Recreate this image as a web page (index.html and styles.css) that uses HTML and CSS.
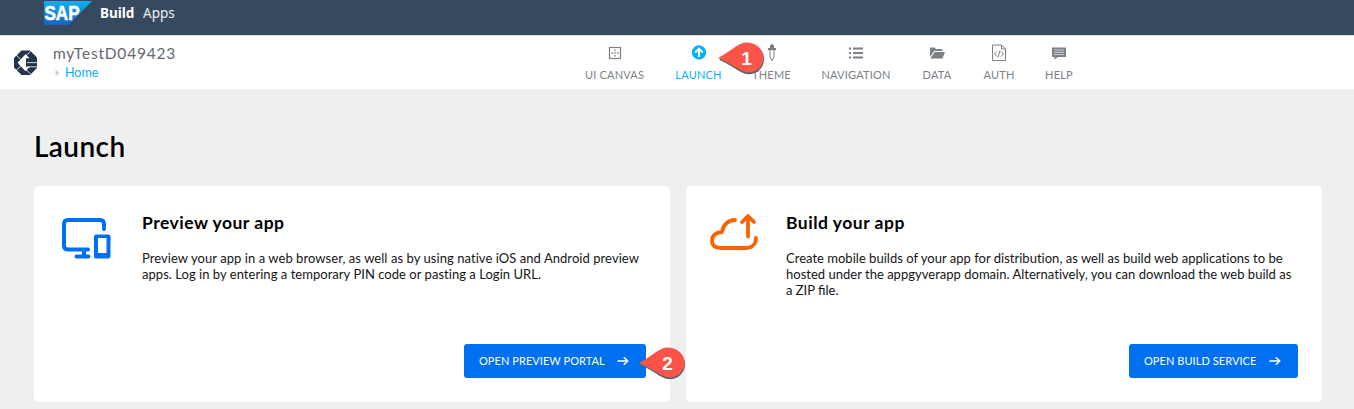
FILE: index.html
```html
<!DOCTYPE html>
<html lang="en">
<head>
<meta charset="utf-8">
<title>SAP Build Apps</title>
<link rel="stylesheet" href="styles.css">
</head>
<body>
<header class="shell">
  <svg class="sap-logo" width="48" height="24" viewBox="0 0 48 24">
    <defs><linearGradient id="sap" x1="0" y1="0" x2="0" y2="1"><stop offset="0" stop-color="#0fb0ee"/><stop offset="1" stop-color="#1b62c4"/></linearGradient></defs>
    <path d="M0 0H48L24.500 24H0Z" fill="url(#sap)"/>
    <text class="sap-text" x="0.500" y="18.500" textLength="35" lengthAdjust="spacingAndGlyphs">SAP</text>
  </svg>
  <span class="product-bold">Build</span><span class="product">Apps</span>
</header>
<nav class="toolbar">
  <svg class="app-logo" width="24" height="26" viewBox="0 0 24 26">
    <path d="M7.500 .5H16L23 7.500V18L16 25H7.500L0 17.500V8Z" fill="#22344c"/>
    <path d="M11.500 4.300 15.800 8.300H12V16.800H15.800L11.500 21.300 3.500 12.800Z" fill="#fff"/>
    <path d="M2 5 7 9.500M2 20.500 7 16M16.500 1.500 12 5.500M16.500 23.800 12 19.800M13 12.600H24M13 16.800H24" stroke="#fff" stroke-width=".8"/>
  </svg>
  <div class="project">
    <div class="project-name">myTestD049423</div>
    <div class="crumb"><svg width="5" height="8" viewBox="0 0 5 8"><path d="M.5 .5 4.500 4 .5 7.500Z" fill="#cfd1d4"/></svg><span>Home</span></div>
  </div>
  <div class="tabs">
    <div class="tab t-canvas">
      <svg width="22" height="20" viewBox="0 0 22 20"><rect x="5.500" y="4.500" width="11" height="11" fill="none" stroke="#7b7f86" stroke-width="1.200"/><path d="M11 6.500V8M11 9.300V10.700M11 12V13.500M7.500 10H9M10.300 10H11.700M13 10H14.500" stroke="#7b7f86" stroke-width="1.300"/></svg>
      <span>UI CANVAS</span>
    </div>
    <div class="tab t-launch active">
      <svg width="22" height="20" viewBox="0 0 22 20"><circle cx="11" cy="9.500" r="7.200" fill="#08aeff"/><path d="M11 14V6M7.200 9.500 11 5.700 14.800 9.500" fill="none" stroke="#fff" stroke-width="2"/></svg>
      <span>LAUNCH</span>
    </div>
    <div class="tab t-theme">
      <svg width="22" height="20" viewBox="0 0 22 20"><path d="M9 2.500Q11 0 13 2.500V5H15V7.300H7V5H9Z" fill="#7b7f86"/><path d="M9 7V14L11 17.500 13 14V7" fill="none" stroke="#7b7f86"/></svg>
      <span>THEME</span>
    </div>
    <div class="tab t-nav">
      <svg width="22" height="20" viewBox="0 0 22 20"><path d="M4 5.500H6M4 10H6M4 14.500H6M8 5.500H18M8 10H18M8 14.500H18" stroke="#7b7f86" stroke-width="1.800"/></svg>
      <span>NAVIGATION</span>
    </div>
    <div class="tab t-data">
      <svg width="22" height="20" viewBox="0 0 22 20"><path d="M4 5Q4 4.500 4.500 4.500H8.500L10 6H15.500Q16.500 6 16.500 7V8H8L4 14Z" fill="#7b7f86"/><path d="M8.500 9H19L16.500 15.500H4.500Z" fill="#7b7f86"/></svg>
      <span>DATA</span>
    </div>
    <div class="tab t-auth">
      <svg width="22" height="20" viewBox="0 0 22 20"><path d="M4.500 2H13.500L17.500 6V17.500H4.500ZM13.500 2V6H17.500M9 8.500 6.500 11 9 13.500M13 8.500 15.500 11 13 13.500M12 7.500 10 14.500" fill="none" stroke="#7b7f86"/></svg>
      <span>AUTH</span>
    </div>
    <div class="tab t-help">
      <svg width="22" height="20" viewBox="0 0 22 20"><path d="M4 4.500H18V14H10L6.500 16.500V14H4Z" fill="#7b7f86"/><path d="M6 7H16M6 9.300H16M6 11.600H16" stroke="#d8d9db" stroke-width=".9"/></svg>
      <span>HELP</span>
    </div>
  </div>
  <svg class="pin pin-one" width="48" height="36" viewBox="0 0 48 36">
    <path class="pin-shadow" d="M1 18C10 13 18 5 25 3C34 0 46 6 46 17C46 29 34 35 25 31C18 28 10 21 1 18Z"/>
    <path d="M0 16C10 11 18 3 25 1C34 -1 45.500 5 45.500 15.500C45.500 27 34 33 25 29C18 26 10 20 0 16Z" fill="#fc5449"/>
    <text x="28.500" y="22.500">1</text>
  </svg>
</nav>
<main>
  <h1><span>Launch</span></h1>
  <div class="cards">
    <section class="card preview">
      <svg class="card-icon" width="50" height="44" viewBox="0 0 50 44"><path d="M42 11V6Q42 2 38 2H6Q2 2 2 6V27.500Q2 31.500 6 31.500H26M22 32V38M14.500 38.500H26.500" fill="none" stroke="#0070f2" stroke-width="4" stroke-linecap="round"/><path d="M34 16.500H46.500Q48.500 16.500 48.500 18.500V38.500Q48.500 40.500 46.500 40.500H34Q32 40.500 32 38.500V18.500Q32 16.500 34 16.500ZM36 20V35H44.500V20Z" fill="#0070f2" fill-rule="evenodd"/></svg>
      <div class="card-body">
        <h2><span>Preview your app</span></h2>
        <p><span class="p1">Preview your app in a web browser, as well as by using native iOS and Android preview</span><br><span class="p2">apps. Log in by entering a temporary PIN code or pasting a Login URL.</span></p>
      </div>
      <button class="button b-preview"><span>OPEN PREVIEW PORTAL</span><svg width="12" height="10" viewBox="0 0 12 10"><path d="M.5 5H10.500M6.800 1.200 10.700 5 6.800 8.800" fill="none" stroke="#fff" stroke-width="1.500"/></svg></button>
      <svg class="pin pin-two" width="48" height="36" viewBox="0 0 48 36">
        <path class="pin-shadow" d="M1 18C10 13 18 5 25 3C34 0 46 6 46 17C46 29 34 35 25 31C18 28 10 21 1 18Z"/>
        <path d="M0 16C10 11 18 3 25 1C34 -1 45.500 5 45.500 15.500C45.500 27 34 33 25 29C18 26 10 20 0 16Z" fill="#fc5449"/>
        <text x="28.500" y="22.500">2</text>
      </svg>
    </section>
    <section class="card build">
      <svg class="card-icon" width="50" height="44" viewBox="0 0 50 44"><path d="M25 8C18 8 13 13 12 20C7 20 2 23 2 28.500C2 34 6 36 11 36H36C42 36 46 32 46 26M38 24.500V5M32 10 38 4 44 10" fill="none" stroke="#fa6400" stroke-width="3.800" stroke-linecap="round" stroke-linejoin="round"/></svg>
      <div class="card-body">
        <h2><span>Build your app</span></h2>
        <p><span class="p3">Create mobile builds of your app for distribution, as well as build web applications to be</span><br><span class="p4">hosted under the appgyverapp domain. Alternatively, you can download the web build as</span><br><span class="p5">a ZIP file.</span></p>
      </div>
      <button class="button b-build"><span>OPEN BUILD SERVICE</span><svg width="12" height="10" viewBox="0 0 12 10"><path d="M.5 5H10.500M6.800 1.200 10.700 5 6.800 8.800" fill="none" stroke="#fff" stroke-width="1.500"/></svg></button>
    </section>
  </div>
</main>
</body>
</html>
```
FILE: styles.css
```css
* { box-sizing: border-box; }
body { margin: 0; height: 409px; overflow: hidden; background: #eeeff1; font-family: Lato, "Open Sans", sans-serif; color: #000; }
.shell { height: 35px; background: #354a5f; display: flex; align-items: flex-start; padding: 1px 0 0 44px; color: #fff; font-family: "Noto Sans", sans-serif; font-size: 13.5px; line-height: 24px; }
.sap-text { font: bold 20px "Liberation Sans", Arial, sans-serif; fill: #fff; stroke: #fff; stroke-width: .6px; }
.product-bold { font-weight: 700; margin-left: 8px; width: 43px; }
.product { opacity: .92; }
.toolbar { position: relative; height: 55px; background: #fff; display: flex; border-bottom: 1px solid #f3f4f5; border-top: 1px solid #d9dcdf; }
.app-logo { margin: 14px 0 0 14px; }
.project { margin: 7px 0 0 15px; width: 515px; }
.project-name { font-size: 15.5px; line-height: 20px; letter-spacing: .8px; color: #63676f; }
.crumb { display: flex; align-items: center; gap: 5px; margin-left: 2px; font-size: 12.5px; line-height: 19px; color: #08aeff; }
.tabs { display: flex; padding-top: 7px; }
.tab { display: flex; flex-direction: column; align-items: center; font-size: 11px; line-height: 14px; color: #7b7f86; white-space: nowrap; letter-spacing: .2px; }
.tab span { margin-top: 5px; }
.t-canvas { width: 93px; }
.t-launch { width: 75px; }
.t-theme { width: 71px; }
.t-nav { width: 98px; }
.t-data { width: 64px; }
.t-auth { width: 60px; }
.t-help { width: 60px; }
.active { color: #08aeff; }
.pin { position: absolute; overflow: visible; }
.pin text { font: bold 19px "Liberation Sans", Arial, sans-serif; fill: #fff; text-anchor: middle; }
.pin-shadow { fill: #65666a; }
.pin-one { left: 718px; top: 6px; }
.pin-two { left: 605px; top: 161px; }
main { padding: 39px 32px 0 34px; }
h1 { margin: 0; height: 57px; font-size: 28px; line-height: 34px; font-weight: 600; letter-spacing: .4px; }
.cards { display: flex; gap: 16px; }
.card { position: relative; width: 636px; height: 216px; background: #fff; border-radius: 5px; display: flex; padding: 25px 24px 24px 28px; flex-shrink: 0; }
.card.build { padding-left: 24px; }
.card-icon { margin-top: 7px; flex-shrink: 0; }
.build .card-icon { margin-top: 1px; }
.card-body { margin-left: 30px; white-space: nowrap; width: 500px; flex-shrink: 0; }
.build .card-body { margin-left: 26px; }
h2 { margin: 0 0 16px; font-size: 17.5px; line-height: 23px; font-weight: 700; letter-spacing: .5px; }
p { margin: 0; font-size: 13px; line-height: 16px; color: #151515; }
.p1 { letter-spacing: .06px; }
.p2 { letter-spacing: .035px; }
.p3, .p4 { letter-spacing: .015px; }
.button { position: absolute; right: 24px; bottom: 24px; height: 34px; border: 0; border-radius: 3px; background: #0070f2; color: #fff; font: 11px/14px Lato, sans-serif; padding: 0 17px 0 15px; display: flex; align-items: center; justify-content: space-between; letter-spacing: .06px; white-space: nowrap; }
.b-preview { width: 182px; }
.b-build { width: 169px; }
```
